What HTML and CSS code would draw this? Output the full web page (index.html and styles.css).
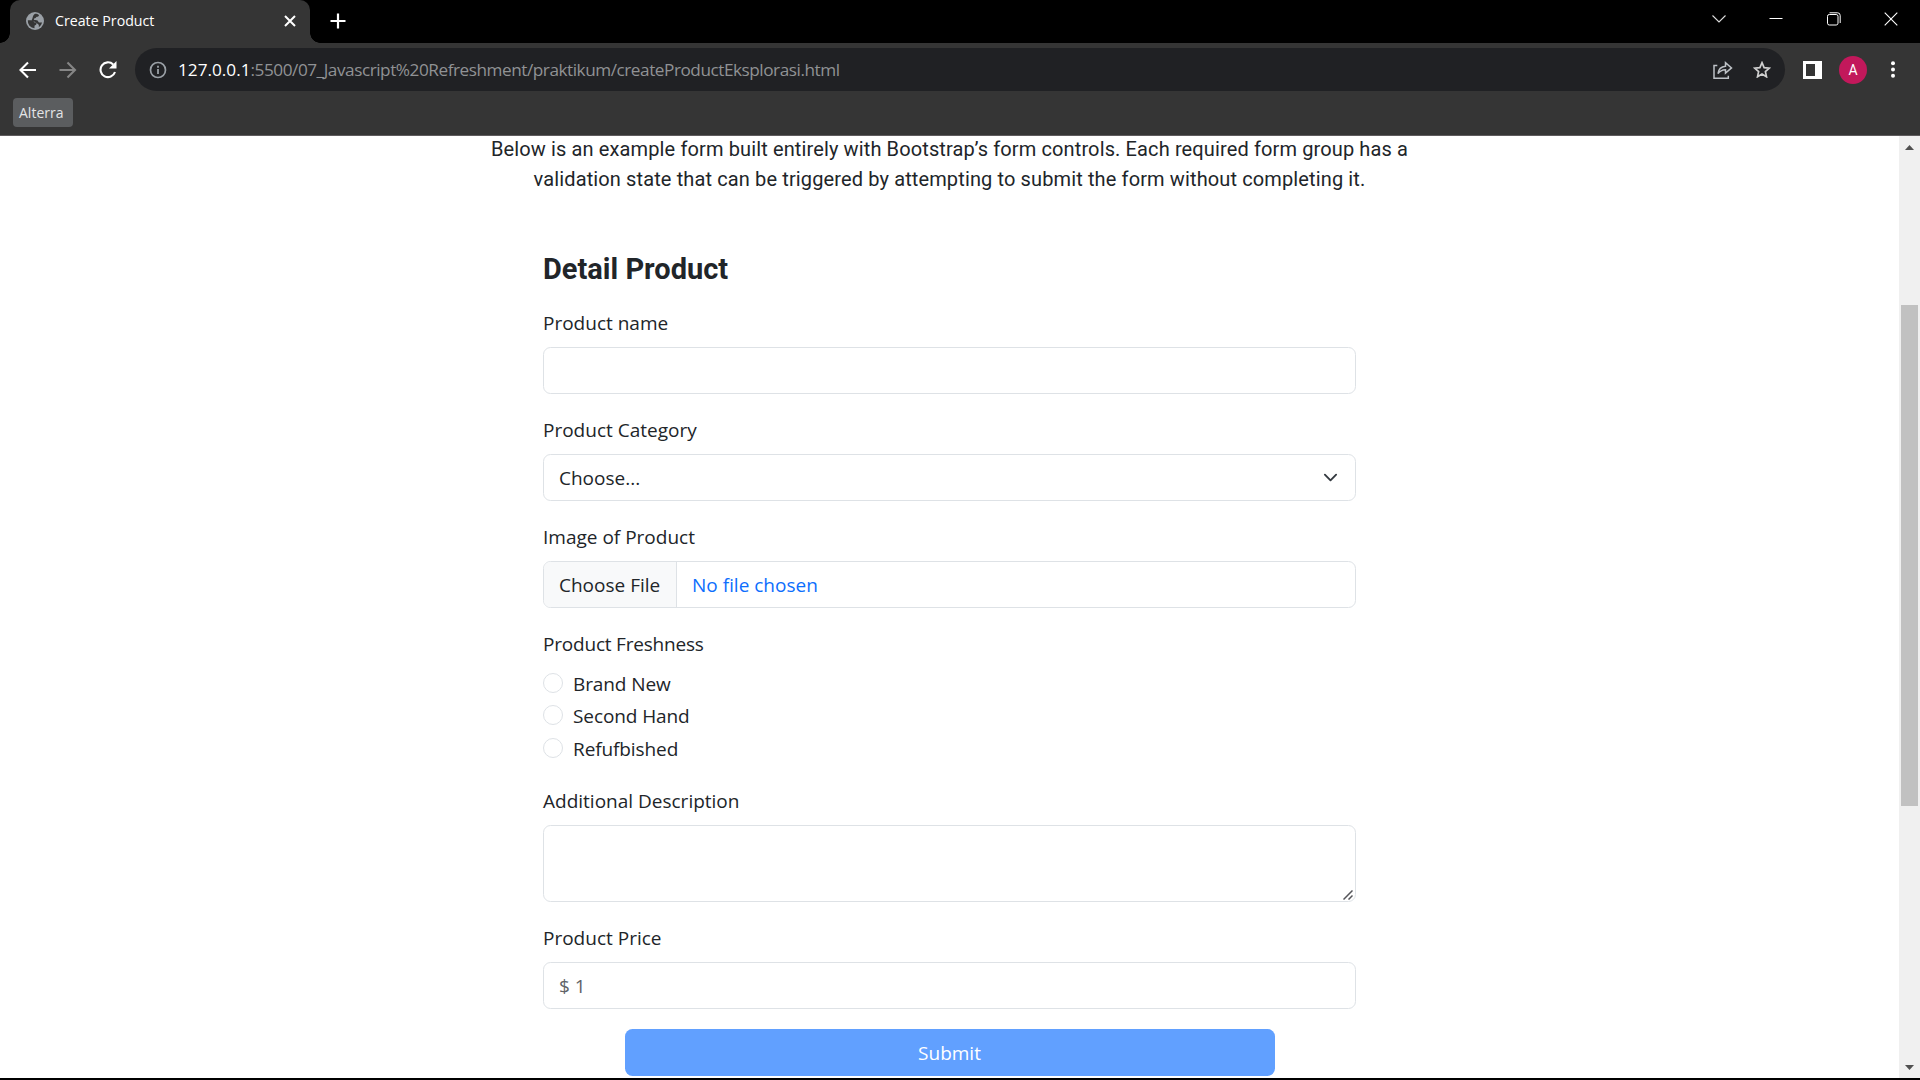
FILE: index.html
```html
<!DOCTYPE html>
<html lang="en">
<head>
<meta charset="utf-8">
<title>Create Product</title>
<link rel="stylesheet" href="styles.css">
</head>
<body>
<div class="browser">
  <div class="tabstrip">
    <div class="tab">
      <svg class="globe" width="18" height="18" viewBox="0 0 18 18"><circle cx="9" cy="9" r="9" fill="#9aa0a6"/><path d="M1.800 8.300h3.400c1.900 0 2.300 2.200 4 2.300 1.300.1 1.700 1 1 1.900-.5.700-1.600.6-1.700 1.600v2.200A7.300 7.300 0 0 1 1.800 8.300zM9 1.700c1.800 0 3 .5 4 1.300-.1 1.400-.8 1.700-2 1.700-1.100 0-.9 1.300-2 1.500-1.300.2-1.600 1.500-.4 1.900 1 .3 2.600-.2 3.300.9.500.8.700 1.500 1.700 1.500h2.500a7.300 7.300 0 0 1-3.300 4.700c.3-1.500.1-2.400-.9-3.100-1.500-1-2.600-2.500-4.400-2.600-1.600-.1-2.200-1.400-1.300-2.500C7 5.900 6.300 3.600 9 1.700z" fill="#353535"/></svg>
      <span class="tab-title">Create Product</span>
      <svg class="tab-close" width="12" height="12" viewBox="0 0 12 12"><path d="M1 1l10 10M11 1L1 11" stroke="#fff" stroke-width="2"/></svg>
    </div>
    <svg class="new-tab" width="16" height="16" viewBox="0 0 16 16"><path d="M8 .5v15M.5 8h15" stroke="#fff" stroke-width="2.200"/></svg>
    <div class="window-buttons">
      <svg width="14" height="14" viewBox="0 0 14 14"><path d="M.5 3.500l6.500 6.500 6.500-6.500" fill="none" stroke="#ddd" stroke-width="1.100"/></svg>
      <svg width="14" height="14" viewBox="0 0 14 14"><path d="M.5 6.500h13" stroke="#fff"/></svg>
      <svg width="14" height="14" viewBox="0 0 14 14"><rect x=".5" y="2.500" width="10.500" height="10.500" rx="1.800" fill="none" stroke="#fff"/><path d="M2.500.8h8a2.700 2.700 0 0 1 2.700 2.700v7.500" fill="none" stroke="#fff"/></svg>
      <svg width="14" height="14" viewBox="0 0 14 14"><path d="M.7.700l12.600 12.600M13.300.700L.7 13.300" stroke="#fff" stroke-width="1.100"/></svg>
    </div>
  </div>
  <div class="toolbar">
    <div class="nav">
      <svg width="18" height="18" viewBox="0 0 18 18"><path d="M17 9H2M9 1.500L1.500 9 9 16.500" fill="none" stroke="#fff" stroke-width="2.100"/></svg>
      <svg width="18" height="18" viewBox="0 0 18 18"><path d="M.5 9h15M8.500 1.500L16 9l-7.500 7.500" fill="none" stroke="#868686" stroke-width="2.100"/></svg>
      <svg width="18" height="18" viewBox="0 0 18 18"><path d="M14.200 3.500A7.400 7.400 0 1 0 16 11" fill="none" stroke="#fff" stroke-width="2.100"/><path d="M17.500 0v7.500H10z" fill="#fff"/></svg>
    </div>
    <div class="address">
      <svg class="info" width="18" height="18" viewBox="0 0 18 18"><circle cx="9" cy="9" r="7.500" fill="none" stroke="#9aa0a6" stroke-width="1.700"/><path d="M9 8v5M9 4.800v1.900" stroke="#9aa0a6" stroke-width="1.800"/></svg>
      <span class="url"><span class="host">127.0.0.1</span><span class="path">:5500/07_Javascript%20Refreshment/praktikum/createProductEksplorasi.html</span></span>
      <svg class="share" width="20" height="18" viewBox="0 0 20 18"><path d="M4.300 4.500H1v12.700h14.300v-2.500M5 12.700c.5-4.500 3.200-7 7.500-7.400V1.700l6 5.200-6 5.200V8.700C9.200 8.800 6.800 10 5 12.700z" fill="none" stroke="#bdc1c6" stroke-width="1.500"/></svg>
      <svg class="star" width="18" height="17" viewBox="0 0 18 17"><path d="M9 1.700l2.100 4.900 5.200.5-3.900 3.500 1.100 5.200L9 13.100l-4.500 2.700 1.100-5.200L1.700 7.100l5.200-.5z" fill="none" stroke="#d0d0d0" stroke-width="1.700"/></svg>
    </div>
    <svg class="panel" width="19" height="18" viewBox="0 0 19 18"><path d="M0 0h19v18H0zM3 3v12h9V3z" fill="#fff" fill-rule="evenodd"/></svg>
    <span class="avatar">A</span>
    <svg class="menu" width="4" height="17" viewBox="0 0 4 17"><g fill="#fff"><circle cx="2" cy="2.200" r="2"/><circle cx="2" cy="8.500" r="2"/><circle cx="2" cy="14.800" r="2"/></g></svg>
  </div>
  <div class="bookmarks"><span class="bookmark">Alterra</span></div>
  <div class="viewport">
    <main class="page">
      <p class="lead">Below is an example form built entirely with Bootstrap’s form controls. Each required form group has a<br>validation state that can be triggered by attempting to submit the form without completing it.</p>
      <form class="form">
        <h2 class="heading">Detail Product</h2>
        <div class="field">
          <label class="label" for="name">Product name</label>
          <input class="control" id="name" type="text">
        </div>
        <div class="field">
          <label class="label" for="category">Product Category</label>
          <div class="control choice"><span>Choose...</span>
            <svg width="15" height="15" viewBox="0 0 16 16"><path d="M2 5l6 6 6-6" fill="none" stroke="#343a40" stroke-width="2" stroke-linecap="round" stroke-linejoin="round"/></svg>
          </div>
        </div>
        <div class="field">
          <span class="label">Image of Product</span>
          <div class="control file"><span class="file-button">Choose File</span><span class="file-name">No file chosen</span></div>
        </div>
        <div class="field">
          <span class="label tight">Product Freshness</span>
          <div class="radios">
            <label class="radio"><span class="dot"></span><span>Brand New</span></label>
            <label class="radio"><span class="dot"></span><span>Second Hand</span></label>
            <label class="radio"><span class="dot"></span><span>Refufbished</span></label>
          </div>
        </div>
        <div class="field">
          <label class="label" for="description">Additional Description</label>
          <div class="area-wrap">
            <textarea class="control area" id="description"></textarea>
            <svg class="grip" width="10" height="10" viewBox="0 0 10 10"><path d="M.5 9.500l9-9M5.500 9.500l4-4" stroke="#55555a" stroke-width="1.500"/></svg>
          </div>
        </div>
        <div class="field">
          <label class="label" for="price">Product Price</label>
          <input class="control price" id="price" type="text" placeholder="$ 1">
        </div>
        <button class="submit" type="button">Submit</button>
      </form>
    </main>
    <div class="scrollbar">
      <svg width="9" height="5" viewBox="0 0 9 5"><path d="M0 5L4.500 0 9 5z" fill="#505050"/></svg>
      <div class="thumb"></div>
      <svg width="9" height="5" viewBox="0 0 9 5"><path d="M0 0l4.500 5L9 0z" fill="#505050"/></svg>
    </div>
  </div>
</div>
</body>
</html>
```
FILE: styles.css
```css
* { box-sizing: border-box; }
body { margin: 0; background: #000; font-family: "Open Sans", "Noto Sans", sans-serif; }
svg { display: block; flex: none; }
.browser { display: flex; flex-direction: column; width: 1920px; height: 1080px; padding-bottom: 2px; overflow: hidden; }

.tabstrip { display: flex; flex: none; height: 43px; padding-left: 10px; background: #000; color: #fff; }
.tab { position: relative; display: flex; align-items: center; width: 300px; padding: 0 14px 2px 16px; border-radius: 10px 10px 0 0; background: #353535; }
.tab::before, .tab::after { content: ""; position: absolute; bottom: 0; width: 10px; height: 10px; }
.tab::before { left: -10px; background: radial-gradient(circle at 0 0, #000 9.500px, #353535 10px); }
.tab::after { right: -10px; background: radial-gradient(circle at 100% 0, #000 9.500px, #353535 10px); }
.tab-title { flex: 1; margin-left: 11px; font-size: 14.200px; white-space: nowrap; }
.new-tab { margin: 13px 0 0 19.500px; }
.window-buttons { display: flex; gap: 43.300px; margin: 12px 22px 0 auto; }

.toolbar { display: flex; flex: none; align-items: center; height: 53px; padding: 0 25px 0 19px; background: #353535; }
.nav { display: flex; gap: 22px; width: 116px; }
.address { display: flex; align-items: center; width: 1650px; height: 43px; padding: 0 14px; border-radius: 22px; background: #202124; }
.url { flex: 1; margin-left: 11px; font-size: 17.200px; white-space: nowrap; }
.host { color: #fff; }
.path { color: #909294; letter-spacing: -.460px; }
.share { margin-right: 20px; }
.panel { margin-left: 18px; }
.avatar { width: 28px; height: 28px; margin-left: 17px; border-radius: 50%; background: #c2185b; color: #fff; font: 14px/28px Roboto, sans-serif; text-align: center; }
.menu { margin-left: auto; }

.bookmarks { flex: none; height: 40px; padding: 2px 13px; border-bottom: 1px solid #5e5b5d; background: #353535; }
.bookmark { display: block; width: 60px; height: 29px; padding-left: 6px; border-radius: 4px; background: #5b5d5f; color: #e3e4e6; font-size: 14px; line-height: 29px; }

.viewport { display: flex; flex: 1; min-height: 0; background: #fff; }
.page { flex: 1; color: #212529; }
.lead { margin: -2px 0 0; font: 20px/30px Roboto, sans-serif; letter-spacing: .125px; text-align: center; white-space: nowrap; }
.form { display: flex; flex-direction: column; gap: 20px; width: 813px; margin: 57px auto 0; font-size: 19px; }
.heading { margin: 0; font: 700 29px/36px Roboto, sans-serif; }
.field { display: flex; flex-direction: column; gap: 10px; }
.label { height: 30px; line-height: 32px; }
.tight { letter-spacing: -.200px; }
.control { width: 100%; height: 47px; margin: 0; padding: 0 15px; border: 1px solid #dee2e6; border-radius: 7.500px; outline: 0; background: #fff; color: #212529; font: 19px "Open Sans", "Noto Sans", sans-serif; }
.control::placeholder { color: #5f6368; opacity: 1; }
.choice { display: flex; align-items: center; justify-content: space-between; padding-right: 17.500px; }
.price { padding-top: 2px; }
.file { display: flex; padding: 0; overflow: hidden; line-height: 46px; }
.file-button { width: 133px; padding-left: 15px; border-right: 1px solid #dee2e6; background: #f8f9fa; white-space: nowrap; }
.file-name { padding-left: 15px; color: #0d6efd; }
.radios { display: flex; flex-direction: column; gap: 2.400px; padding-bottom: 2.200px; letter-spacing: -.100px; }
.radio { display: flex; align-items: center; gap: 10px; height: 30px; line-height: 28px; }
.radio span:last-child { padding-top: 2px; }
.dot { width: 20px; height: 20px; border: 1px solid #dee2e6; border-radius: 50%; }
.area-wrap { position: relative; height: 77px; }
.area { display: block; height: 77px; resize: none; }
.grip { position: absolute; right: 3px; bottom: 2px; }
.submit { align-self: center; width: 650px; height: 47px; padding: 2px 0 0; border: 0; border-radius: 7.500px; background: #61a0ff; color: #fff; font: 19px "Open Sans", "Noto Sans", sans-serif; }

.scrollbar { display: flex; flex-direction: column; align-items: center; width: 21px; padding: 9px 0 8px; background: #f0f0f0; }
.thumb { width: 17px; height: 501px; margin: 155px 0 auto; background: #c1c1c1; }
```
